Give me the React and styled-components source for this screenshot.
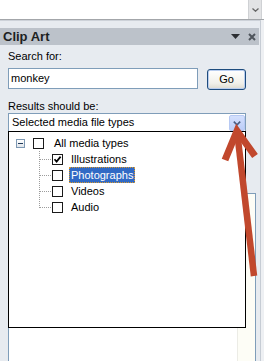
import React from "react";
import styled, { createGlobalStyle } from "styled-components";

const Global = createGlobalStyle`
  body {
    margin: 0;
    background: #ffffff;
    font-family: Tahoma, "Liberation Sans", Arial, sans-serif;
    font-size: 11px;
    color: #000;
  }
`;

const Page = styled.div`
  position: relative;
  width: 264px;
  height: 361px;
  overflow: hidden;
  background: #eef0f3;
`;

const TopStrip = styled.div`
  height: 19px;
  background: #ffffff;
  border-bottom: 1px solid #a3a6aa;
  display: flex;
  justify-content: flex-end;
  padding-right: 2px;
`;

const TopDrop = styled.div`
  width: 14px;
  height: 19px;
  box-sizing: border-box;
  background: #e2e3e5;
  border-left: 1px solid #cfd1d4;
  border-right: 1px solid #cfd1d4;
  display: flex;
  align-items: center;
  justify-content: center;
`;

const Pane = styled.div`
  width: 261px;
  height: 341px;
  box-sizing: border-box;
  background: #e7ebf0;
  border-top: 1px solid #cdd2d9;
  border-right: 1px solid #c6ccd4;
  padding-top: 7px;
`;

const TitleBar = styled.div`
  height: 17px;
  width: 259px;
  background: #bcc2ca;
  display: flex;
  align-items: center;
  padding-left: 3px;
  box-sizing: border-box;
`;

const Title = styled.span`
  font-weight: bold;
  font-size: 13px;
  color: #1d1f22;
  flex: 1;
`;

const TitleIcons = styled.div`
  display: flex;
  align-items: center;
  gap: 8px;
  padding-right: 3px;
`;

const Body = styled.div`
  padding: 0 8px;
`;

const Label = styled.div`
  margin-top: ${({ $top }) => $top}px;
  line-height: 13px;
  color: #000;
`;

const SearchRow = styled.div`
  display: flex;
  align-items: flex-start;
  margin-top: 5px;
`;

const SearchBox = styled.div`
  width: 190px;
  height: 21px;
  box-sizing: border-box;
  border: 1px solid #7f9db9;
  background: #fff;
  padding-left: 2px;
  line-height: 19px;
`;

const GoButton = styled.div`
  width: 39px;
  height: 21px;
  margin: 1px 0 0 9px;
  box-sizing: border-box;
  border: 1px solid #1e4c7e;
  border-radius: 3px;
  background: linear-gradient(#ffffff, #f1f0ea 70%, #dcdad0);
  box-shadow: inset 0 0 0 1px #b9cdef;
  text-align: center;
  line-height: 19px;
`;

const ComboWrap = styled.div`
  position: relative;
`;

const Combo = styled.div`
  width: 238px;
  height: 19px;
  box-sizing: border-box;
  border: 1px solid #7f9db9;
  background: #fff;
  display: flex;
  align-items: flex-start;
`;

const ComboText = styled.span`
  flex: 1;
  padding-left: 3px;
  line-height: 17px;
`;

const ComboButton = styled.div`
  width: 16px;
  height: 16px;
  margin-top: 1px;
  box-sizing: border-box;
  border: 1px solid #b7c9f3;
  border-radius: 2px;
  background: linear-gradient(#d4e0fd, #bccdf8);
  display: flex;
  align-items: center;
  justify-content: center;
`;

const DropList = styled.div`
  position: absolute;
  top: 18px;
  left: 0;
  width: 238px;
  height: 197px;
  box-sizing: border-box;
  border: 1px solid #000;
  background: #fff;
  padding-top: 3px;
  z-index: 2;
`;

const TreeRow = styled.div`
  display: flex;
  align-items: center;
  height: 16px;
  padding-left: ${({ $indent }) => $indent}px;
`;

const Expander = styled.div`
  width: 9px;
  height: 9px;
  box-sizing: border-box;
  border: 1px solid #7d98b3;
  background: linear-gradient(#ffffff, #dfe4ea);
  display: flex;
  align-items: center;
  justify-content: center;
  margin-right: 8px;
  &::after {
    content: "";
    width: 5px;
    height: 1px;
    background: #1f3a5a;
  }
`;

const Connector = styled.span`
  width: 13px;
  height: 16px;
  background-image: repeating-linear-gradient(
      to bottom,
      #9c9c9c 0 1px,
      transparent 1px 2px
    ),
    repeating-linear-gradient(to right, #9c9c9c 0 1px, transparent 1px 2px);
  background-size: 1px ${({ $last }) => ($last ? "9px" : "16px")}, 12px 1px;
  background-position: 0 0, 1px 8px;
  background-repeat: no-repeat;
`;

const Check = styled.span`
  width: 11px;
  height: 11px;
  box-sizing: border-box;
  border: 1px solid #1a1a1a;
  background: #fff;
  display: flex;
  align-items: center;
  justify-content: center;
  margin-right: ${({ $gap }) => $gap}px;
`;

const ItemText = styled.span`
  height: 16px;
  box-sizing: border-box;
  line-height: 14px;
  padding: 0 1px;
  border: 1px dotted ${({ $selected }) => ($selected ? "#d9992e" : "transparent")};
  background: ${({ $selected }) => ($selected ? "#316ac5" : "transparent")};
  color: ${({ $selected }) => ($selected ? "#ffffff" : "#000000")};
`;

const ResultsBox = styled.div`
  margin-top: 61px;
  width: 248px;
  height: 175px;
  box-sizing: border-box;
  border: 1px solid #7f9db9;
  background: #fff;
  display: flex;
  justify-content: flex-end;
`;

const ScrollTrack = styled.div`
  width: 17px;
  background: #fdfdf6;
  border-left: 1px solid #ecece6;
`;

const Overlay = styled.svg`
  position: absolute;
  top: 0;
  left: 0;
  pointer-events: none;
  z-index: 5;
`;

const children = [
  { label: "Illustrations", checked: true },
  { label: "Photographs", selected: true },
  { label: "Videos" },
  { label: "Audio" },
];

const CheckMark = () => (
  <svg width="9" height="9" viewBox="0 0 9 9">
    <path d="M1.5 4.2 L3.6 6.6 L7.6 1.6" fill="none" stroke="#000" strokeWidth="1.7" />
  </svg>
);

export default function App() {
  return (
    <>
      <Global />
      <Page>
        <TopStrip>
          <TopDrop>
            <svg width="7" height="4" viewBox="0 0 7 4">
              <path d="M0.5 0.5 L3.5 3.2 L6.5 0.5" fill="none" stroke="#666" strokeWidth="1.3" />
            </svg>
          </TopDrop>
        </TopStrip>
        <Pane>
          <TitleBar>
            <Title>Clip Art</Title>
            <TitleIcons>
              <svg width="9" height="5" viewBox="0 0 9 5">
                <path d="M0 0 H9 L4.5 5 Z" fill="#2c2f33" />
              </svg>
              <svg width="8" height="8" viewBox="0 0 8 8">
                <path d="M1 1 L7 7 M7 1 L1 7" stroke="#4f555c" strokeWidth="2" />
              </svg>
            </TitleIcons>
          </TitleBar>
          <Body>
            <Label $top={5}>Search for:</Label>
            <SearchRow>
              <SearchBox>monkey</SearchBox>
              <GoButton>Go</GoButton>
            </SearchRow>
            <Label $top={10}>Results should be:</Label>
            <ComboWrap>
              <Combo>
                <ComboText>Selected media file types</ComboText>
                <ComboButton>
                  <svg width="8" height="5" viewBox="0 0 8 5">
                    <path d="M0.8 0.6 L4 3.8 L7.2 0.6" fill="none" stroke="#4a5d82" strokeWidth="1.6" />
                  </svg>
                </ComboButton>
              </Combo>
              <DropList>
                <TreeRow $indent={7}>
                  <Expander />
                  <Check $gap={8} />
                  <ItemText>All media types</ItemText>
                </TreeRow>
                {children.map((c, i) => (
                  <TreeRow key={c.label} $indent={30}>
                    <Connector $last={i === children.length - 1} />
                    <Check $gap={6}>{c.checked && <CheckMark />}</Check>
                    <ItemText $selected={c.selected}>{c.label}</ItemText>
                  </TreeRow>
                ))}
              </DropList>
            </ComboWrap>
            <ResultsBox>
              <ScrollTrack />
            </ResultsBox>
          </Body>
        </Pane>
        <Overlay width="264" height="361" viewBox="0 0 264 361">
          <line x1="237" y1="131" x2="254" y2="276" stroke="#c1482d" strokeWidth="6.5" />
          <polyline
            points="225,160 237,131 255,156"
            fill="none"
            stroke="#c1482d"
            strokeWidth="7"
            strokeLinejoin="miter"
            strokeMiterlimit="10"
          />
        </Overlay>
      </Page>
    </>
  );
}
